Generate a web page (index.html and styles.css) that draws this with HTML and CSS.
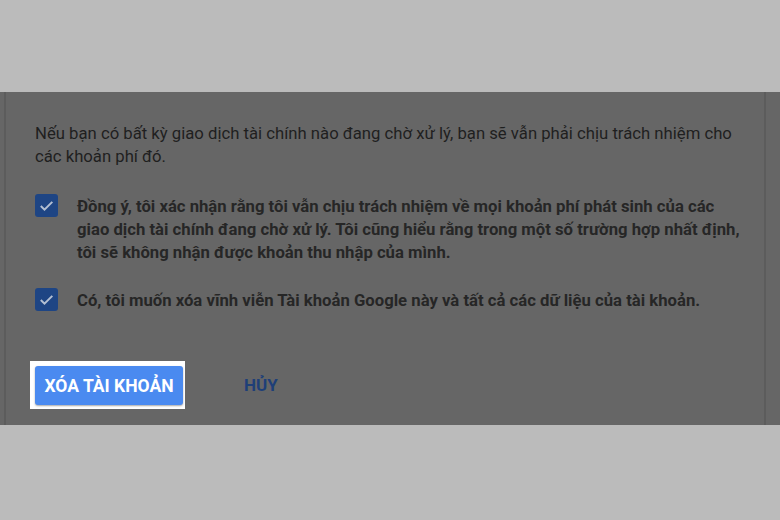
FILE: index.html
```html
<!DOCTYPE html>
<html lang="vi">
<head>
<meta charset="utf-8">
<link rel="stylesheet" href="styles.css">
</head>
<body>
<div class="band top"></div>
<div class="panel">
  <div class="sheet">
    <p class="intro">Nếu bạn có bất kỳ giao dịch tài chính nào đang chờ xử lý, bạn sẽ vẫn phải chịu trách nhiệm cho<br>các khoản phí đó.</p>
    <div class="check-row first">
      <span class="box"><svg viewBox="0 0 23 23" width="23" height="23"><path d="M5.8 12l3.7 3.7 7.8-7.8" fill="none" stroke="#b3bfd2" stroke-width="2"/></svg></span>
      <p class="label">Đồng ý, tôi xác nhận rằng tôi vẫn chịu trách nhiệm về mọi khoản phí phát sinh của các<br>giao dịch tài chính đang chờ xử lý. Tôi cũng hiểu rằng trong một số trường hợp nhất định,<br>tôi sẽ không nhận được khoản thu nhập của mình.</p>
    </div>
    <div class="check-row second">
      <span class="box"><svg viewBox="0 0 23 23" width="23" height="23"><path d="M5.8 12l3.7 3.7 7.8-7.8" fill="none" stroke="#b3bfd2" stroke-width="2"/></svg></span>
      <p class="label">Có, tôi muốn xóa vĩnh viễn Tài khoản Google này và tất cả các dữ liệu của tài khoản.</p>
    </div>
    <div class="actions">
      <div class="highlight"><button class="primary">XÓA TÀI KHOẢN</button></div>
      <button class="text-btn">HỦY</button>
    </div>
  </div>
</div>
<div class="band bottom"></div>
</body>
</html>
```
FILE: styles.css
```css
html, body {
  margin: 0;
  padding: 0;
  width: 780px;
  height: 520px;
  overflow: hidden;
  background: #bbbbbb;
  font-family: Roboto, "Noto Sans", Arial, sans-serif;
}
.band.top { height: 92px; background: #bbbbbb; }
.band.bottom { height: 95px; background: #bbbbbb; }
.panel {
  height: 333px;
  background: #666666;
  padding-left: 4px;
  box-sizing: border-box;
}
.sheet {
  width: 762px;
  height: 100%;
  box-sizing: border-box;
  border-left: 2px solid #5c5c5c;
  border-right: 2px solid #5c5c5c;
  padding: 30px 0 0 29px;
}
.intro {
  margin: 0;
  font-size: 16.7px;
  line-height: 23px;
  color: #1f1f1f;
  white-space: nowrap;
}
.check-row {
  display: flex;
  align-items: flex-start;
}
.check-row.first { margin-top: 27px; }
.check-row.second { margin-top: 25px; }
.box {
  flex: none;
  width: 23px;
  height: 23px;
  border-radius: 3px;
  background: #1e4584;
  display: flex;
  margin-top: -1px;
}
.label {
  margin: 0 0 0 19px;
  font-size: 16.7px;
  font-weight: 700;
  line-height: 23px;
  color: #262626;
  white-space: nowrap;
}
.actions {
  display: flex;
  align-items: center;
  margin-top: 49px;
}
.highlight {
  background: #ffffff;
  padding: 5px 2px 4px 5px;
  margin-left: -5px;
}
.primary {
  display: block;
  width: 148px;
  height: 39px;
  border: none;
  border-radius: 3px;
  background: #4a8af0;
  color: #ffffff;
  font-family: Roboto, "Noto Sans", Arial, sans-serif;
  font-size: 17.5px;
  font-weight: 700;
  padding: 0;
  box-shadow: 0 1px 2px rgba(0,0,0,0.35);
}
.text-btn {
  border: none;
  background: none;
  padding: 0;
  margin-left: 59px;
  font-family: Roboto, "Noto Sans", Arial, sans-serif;
  font-size: 17px;
  font-weight: 700;
  color: #1e3f78;
}
```
